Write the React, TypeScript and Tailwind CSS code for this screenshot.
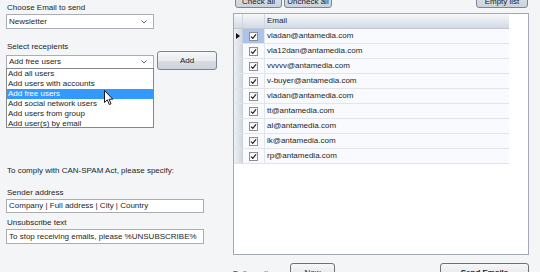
import React from "react";

const emails = [
  "vladan@antamedia.com",
  "vla12dan@antamedia.com",
  "vvvvv@antamedia.com",
  "v-buyer@antamedia.com",
  "vladan@antamedia.com",
  "tt@antamedia.com",
  "al@antamedia.com",
  "lk@antamedia.com",
  "rp@antamedia.com",
];

const options = [
  "Add all users",
  "Add users with accounts",
  "Add free users",
  "Add social network users",
  "Add users from group",
  "Add user(s) by email",
];

function Chevron() {
  return (
    <svg width="6" height="4" viewBox="0 0 6 4" className="shrink-0">
      <path d="M0.5 0.5 L3 3 L5.5 0.5" fill="none" stroke="#555" strokeWidth="0.9" />
    </svg>
  );
}

function Combo({ value }: { value: string }) {
  return (
    <div className="w-[148px] h-[15px] border border-[#abadb3] bg-white flex items-center pl-[2px] pr-[6px] justify-between">
      <span>{value}</span>
      <Chevron />
    </div>
  );
}

function Check() {
  return (
    <div className="w-[9px] h-[9px] border border-[#8e8f8f] bg-[linear-gradient(to_bottom,#f4f4f4,#ffffff)] flex items-center justify-center">
      <svg width="7" height="7" viewBox="0 0 7 7">
        <path d="M1 3.6 L2.8 5.3 L6 1.4" fill="none" stroke="#222" strokeWidth="1.2" />
      </svg>
    </div>
  );
}

const btn =
  "shrink-0 border border-[#7d8590] rounded-[3px] bg-[linear-gradient(to_bottom,#f6f7f9_0%,#e8ebef_50%,#d8dde4_52%,#ccd2da_100%)] flex justify-center text-[#1a1a1a]";

export default function App() {
  return (
    <div className="relative w-[540px] h-[272px] overflow-hidden bg-[#f4f5f7] flex font-['Liberation_Sans',Arial,sans-serif] text-[8px] leading-[10px] text-[#1e1e1e]">
      {/* Left panel */}
      <div className="w-[233px] shrink-0 pl-[6px] flex flex-col">
        <div className="shrink-0 mt-[3px] h-[10px] pl-[1px]">Choose Email to send</div>
        <div className="shrink-0 mt-[1px]">
          <Combo value="Newsletter" />
        </div>
        <div className="shrink-0 mt-[13px] h-[10px] pl-[1px]">Select recepients</div>
        <div className="shrink-0 mt-[-1px] flex items-start gap-[3px]">
          <div className="relative mt-[4px]">
            <div className="w-[148px] h-[14px] border border-[#abadb3] bg-white flex items-center pl-[2px] pr-[6px] justify-between">
              <span>Add free users</span>
              <Chevron />
            </div>
            <div className="absolute left-0 top-[13px] w-[148px] h-[60px] border border-[#828790] bg-white flex flex-col">
              {options.map((o, i) => (
                <div
                  key={o}
                  className={
                    "flex-1 flex items-center pl-[1px] " +
                    (i === 2 ? "bg-[#3399ff] text-white" : "")
                  }
                >
                  {o}
                </div>
              ))}
            </div>
          </div>
          <div className={btn + " items-center w-[60px] h-[19px]"}>Add</div>
        </div>
        <div className="shrink-0 mt-[96px] h-[10px] pl-[1px]">To comply with CAN-SPAM Act, please specify:</div>
        <div className="shrink-0 mt-[12px] h-[10px] pl-[1px]">Sender address</div>
        <div className="shrink-0 mt-[1px] w-[198px] h-[14px] border border-[#abadb3] bg-white flex items-center pl-[2px]">
          Company | Full address | City | Country
        </div>
        <div className="shrink-0 mt-[5px] h-[10px] pl-[1px]">Unsubscribe text</div>
        <div className="shrink-0 mt-[1px] w-[198px] h-[15px] border border-[#abadb3] bg-white flex items-center pl-[2px]">
          To stop receiving emails, please %UNSUBSCRIBE%
        </div>
      </div>

      {/* Right panel */}
      <div className="w-[296px] shrink-0 flex flex-col">
        <div className="shrink-0 mt-[-11px] h-[19px] flex items-stretch">
          <div className={btn + " items-end ml-[2px] w-[47px]"}>Check all</div>
          <div className={btn + " items-end ml-[2px] w-[48px]"}>Uncheck all</div>
          <div className="flex-1" />
          <div className={btn + " items-end mr-[1px] w-[52px]"}>Empty list</div>
        </div>
        <div className="shrink-0 mt-[5px] h-[242px] border border-[#a3a9b2] bg-white flex flex-col">
          <div className="shrink-0 w-[275px] h-[15px] flex border-b border-[#c3c9d2] bg-[linear-gradient(to_bottom,#f7f8fa_0%,#e4e9f0_50%,#d3dae5_100%)]">
            <div className="w-[9px] border-r border-[#d0d6de]" />
            <div className="w-[22px] border-r border-[#d0d6de]" />
            <div className="flex-1 flex items-center pl-[2px] text-[#1e1e1e]">Email</div>
          </div>
          {emails.map((e, i) => (
            <div key={i} className="shrink-0 w-[275px] h-[15px] flex border-b border-[#e1e5ea] bg-[#f8fafd]">
              <div className="w-[9px] flex items-center justify-center border-r border-[#c9d0da] bg-[linear-gradient(to_right,#eef1f5,#d3d9e2)]">
                {i === 0 && (
                  <svg width="4" height="6" viewBox="0 0 4 6">
                    <path d="M0 0 L4 3 L0 6 Z" fill="#111" />
                  </svg>
                )}
              </div>
              <div
                className={
                  "w-[22px] flex items-center justify-center border-r border-[#e1e5ea] " +
                  (i === 0 ? "bg-[#a9c3ea]" : "")
                }
              >
                <Check />
              </div>
              <div className="flex-1 flex items-center pl-[2px]">{e}</div>
            </div>
          ))}
        </div>
        <div className="shrink-0 mt-[8px] h-[20px] flex items-start">
          <div className="mt-[6px] h-[10px] leading-[10px] w-[57px]">Delivery time:</div>
          <div className={btn + " items-center w-[45px] h-[20px] border-[#707070]"}>Now</div>
          <div className="flex-1" />
          <div className={btn + " items-center w-[89px] h-[20px] font-bold border-[#707070]"}>Send Emails</div>
        </div>
      </div>

      {/* mouse cursor */}
      <svg
        className="absolute left-[104px] top-[90px]"
        width="10"
        height="16"
        viewBox="0 0 10 16"
      >
        <path
          d="M0.5 0.5 L0.5 12.5 L3.3 9.8 L5.3 14.5 L7 13.8 L5.1 9.2 L8.8 9.2 Z"
          fill="#fff"
          stroke="#000"
          strokeWidth="0.9"
          strokeLinejoin="round"
        />
      </svg>
    </div>
  );
}
